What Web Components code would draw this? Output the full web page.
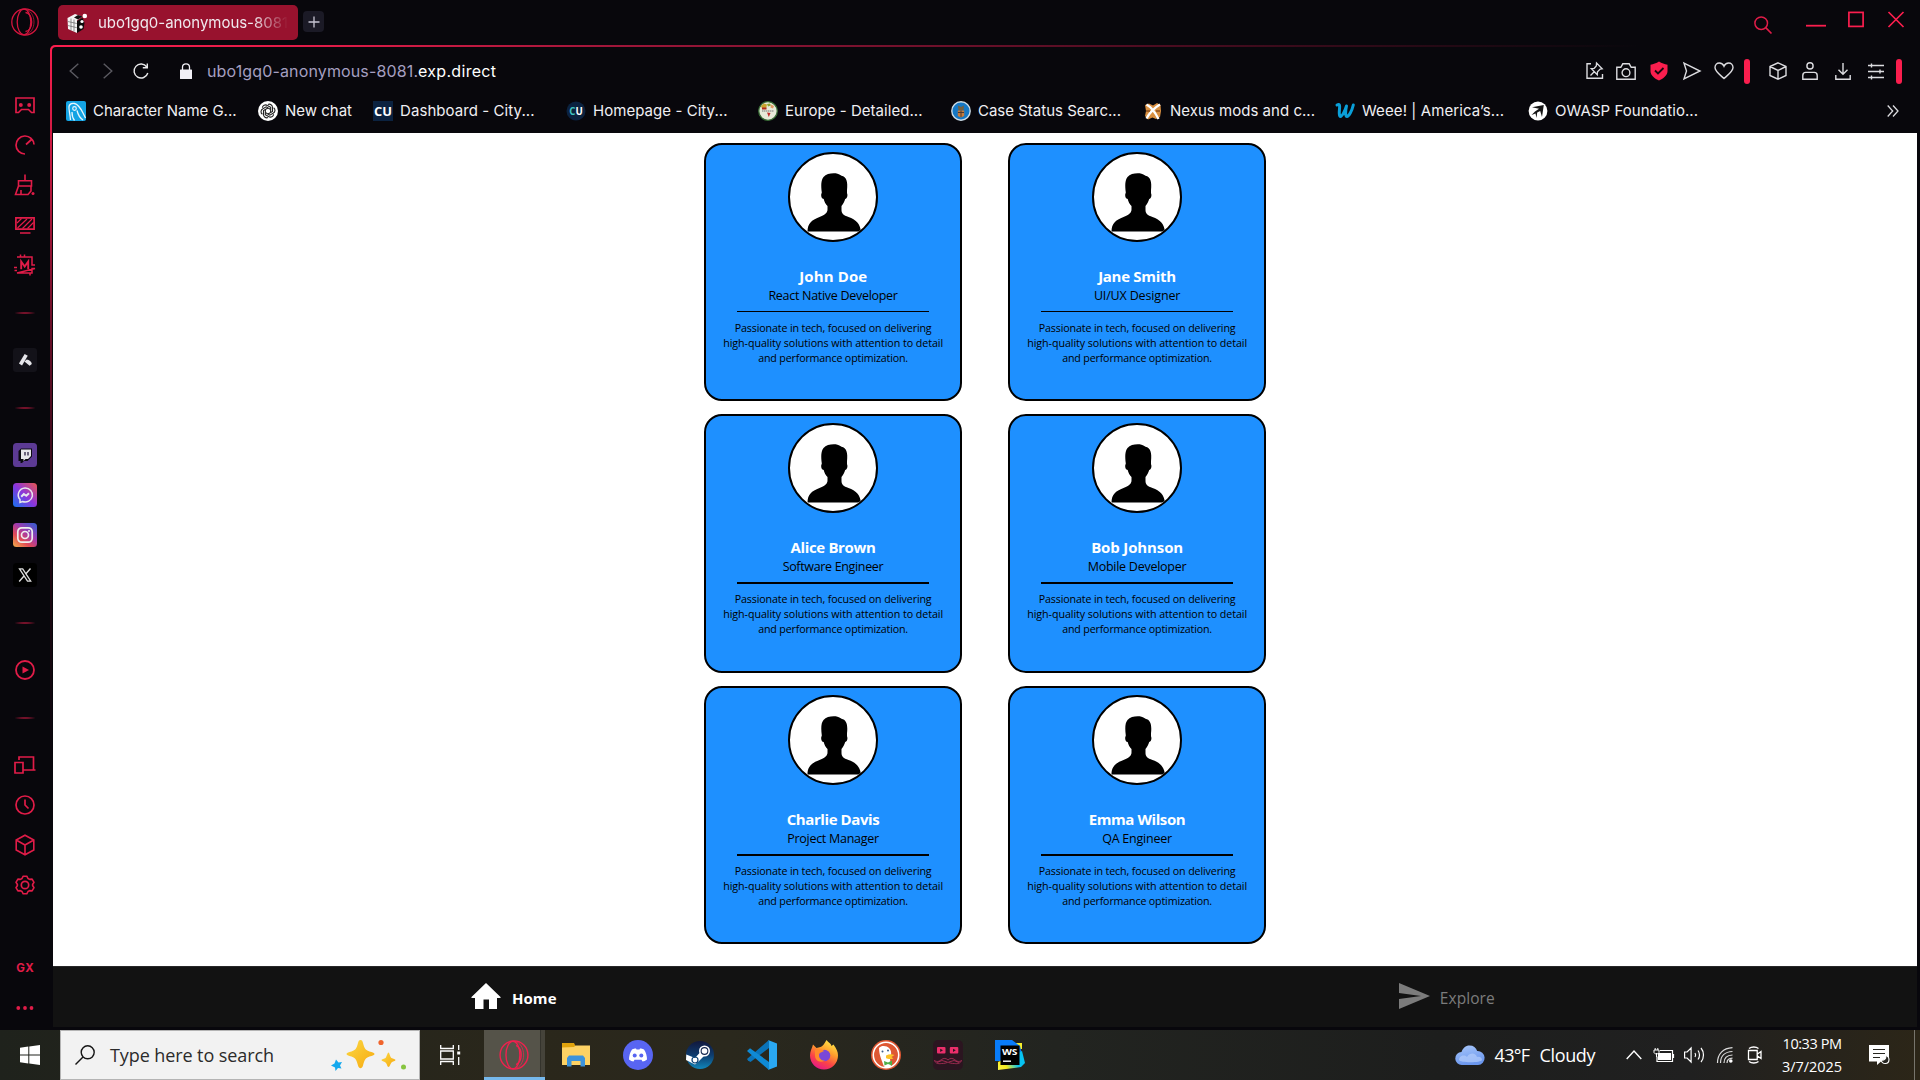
<!DOCTYPE html>
<html lang="en">
<head>
<meta charset="utf-8">
<title>Profile cards</title>
<style>
html,body{margin:0;padding:0;height:100%;overflow:hidden;background:#08070c}
</style>
</head>
<body>
<desktop-screen></desktop-screen>
<script>
const ICONS = {
  opera: ['0 0 28 28', `<g fill="none" stroke="#d4153e" stroke-width="1.300"><circle cx="14" cy="14" r="13.200"/><ellipse cx="13" cy="14" rx="6.800" ry="12.800"/><path d="M14.500 4.500c3.600 0 6.200 4.300 6.200 9.500s-2.600 9.500-6.200 9.500"/><path d="M14.500 1.200c5 1 8.500 6.500 8.500 12.800s-3.500 11.800-8.500 12.800" stroke-width=".7"/></g>`],
  opera2: ['0 0 28 28', `<g fill="none" stroke="#f0204e" stroke-width="1.300"><ellipse cx="14" cy="14" rx="13" ry="13.200"/><ellipse cx="13" cy="14" rx="6.500" ry="12.800"/><path d="M16 5c3 1.500 4.700 5 4.700 9s-1.700 7.500-4.700 9"/><path d="M15 1.200c4.600 1 8 6.500 8 12.800s-3.400 11.800-8 12.800" stroke-width=".7"/></g>`],
  pad: ['0 0 20 18', `<path d="M1 2h18v14.500h-2.500l-3-3h-7l-3 3H1z" fill="none" stroke="currentColor" stroke-width="1.700"/><circle cx="5.800" cy="9" r="2" fill="currentColor"/><circle cx="14.200" cy="9" r="2" fill="currentColor"/>`],
  gauge: ['0 0 20 20', `<path d="M10 19a9 9 0 1 1 9-9.500M11 9.500l5.500-5M15 2.500l2.800 2.800" fill="none" stroke="currentColor" stroke-width="1.700"/>`],
  broom: ['0 0 22 22', `<path d="M11 0.500v6M4.500 12V6.800h13V12zM4.500 12 1.500 20.500h12.500l3-3.500V12M7 20v-4" fill="none" stroke="currentColor" stroke-width="1.600"/><circle cx="19" cy="19.500" r="1.500" fill="currentColor"/>`],
  monitor: ['0 0 20 17', `<path d="M.9.9h18.200v11.200H.9zM5 16h10.500" fill="none" stroke="currentColor" stroke-width="1.700"/><path d="M2.500 11 12 2M7.500 11.500 17 2M12.500 11.500 18.500 5.500M2 6 6.500 1.500" fill="none" stroke="currentColor" stroke-width="1.200"/>`],
  chip: ['0 0 22 22', `<path d="M3 3h15v8h3M21 14.500h-3v4.500H3zM6.500 3V.5M10.500 3V.5M3 13.500H0M3 16.500H.5M16 19v2.500" fill="none" stroke="currentColor" stroke-width="1.500"/><path d="M7.200 15.200V7.500l3.500 5 3.500-5v7.700" fill="none" stroke="currentColor" stroke-width="1.900"/>`],
  aria: ['0 0 24 24', `<rect width="24" height="24" rx="3" fill="#131219"/><path d="M7.500 16.500 13.200 6.800" stroke="#e6e6ea" stroke-width="3.600" stroke-linecap="butt"/><path d="M13.800 11.500c2.500.2 4.700 2 5 4.500l-2.200 1.800-5.200-4.300z" fill="#e6e6ea"/>`],
  twitch: ['0 0 24 24', `<rect width="24" height="24" rx="3.500" fill="#5c3a94"/><path d="M5.500 8 8 5.500h11v8L14.500 18H11l-2 2H7.500v-2h-2z" fill="#0c0b12"/><path d="M8 6.500h10V13l-3 3h-2.500L10.500 18v-2H8z" fill="#e6e6ea"/><path d="M12 9v3.500M15 9v3.500" stroke="#2a1f42" stroke-width="1.300"/>`],
  messenger: ['0 0 24 24', `<defs><linearGradient id="m" x1="0" y1="1" x2="1" y2="0"><stop offset="0" stop-color="#1673f0"/><stop offset=".5" stop-color="#8b35dd"/><stop offset="1" stop-color="#e8574f"/></linearGradient></defs><rect width="24" height="24" rx="3.500" fill="url(#m)"/><path d="M12 5a7.300 7 0 1 1-2.500 13.500L7 19.500v-3A7.300 7 0 0 1 12 5z" fill="none" stroke="#e6e6ee" stroke-width="1.500"/><path d="m8.200 13.700 2.600-2.700 2.500 1.800 2.700-2.500" stroke="#e6e6ee" stroke-width="2" fill="none"/>`],
  insta: ['0 0 24 24', `<defs><linearGradient id="i" x1="0" y1="1" x2=".8" y2="0"><stop offset="0" stop-color="#f3b34c"/><stop offset=".35" stop-color="#e14a55"/><stop offset=".65" stop-color="#a03aae"/><stop offset="1" stop-color="#4358cc"/></linearGradient></defs><rect width="24" height="24" rx="3.500" fill="url(#i)"/><rect x="4.800" y="4.800" width="14.400" height="14.400" rx="4" fill="none" stroke="#eee" stroke-width="1.700"/><circle cx="12" cy="12" r="3.500" fill="none" stroke="#eee" stroke-width="1.700"/><circle cx="16" cy="8" r="1" fill="#eee"/>`],
  x: ['0 0 24 24', `<rect width="24" height="24" rx="3.500" fill="#000"/><path d="M6.500 5.800h3.200l8 12.400h-3.200z" fill="none" stroke="#ddd" stroke-width="1.300"/><path d="M17.500 5.500 12.700 11M11 13l-4.800 5.500" stroke="#ddd" stroke-width="1.400"/>`],
  play: ['0 0 20 20', `<circle cx="10" cy="10" r="9" fill="none" stroke="currentColor" stroke-width="1.800"/><path d="M7.500 6.500v7l6.500-3.500z" fill="currentColor"/>`],
  devices: ['0 0 22 18', `<path d="M5 4V1h14.500v13M9.500 14H21.500M1 6.500h8v10.500H1z" fill="none" stroke="currentColor" stroke-width="1.700"/>`],
  clock: ['0 0 20 20', `<circle cx="10" cy="10" r="9" fill="none" stroke="currentColor" stroke-width="1.700"/><path d="M10 4.500V10l3.500 3.500" fill="none" stroke="currentColor" stroke-width="1.700"/>`],
  cube: ['0 0 20 22', `<path d="M10 1.200 18.800 6v10L10 20.800 1.200 16V6zM1.200 6 10 11l8.800-5M10 11v9.500" fill="none" stroke="currentColor" stroke-width="1.600"/>`],
  gear: ['0 0 20 20', `<path d="M8.200 1.200h3.600l1.200 2.300 1.500.9 2.600-.3 1.900 3.200-1.400 2.200v1l1.400 2.200-1.900 3.200-2.600-.3-1.500.9-1.200 2.300H8.200L7 16.500l-1.500-.9-2.600.3L1 12.700l1.400-2.200v-1L1 7.300l1.900-3.200 2.600.3L7 3.500z" fill="none" stroke="currentColor" stroke-width="1.600" stroke-linejoin="round"/><circle cx="10" cy="10" r="3.700" fill="none" stroke="currentColor" stroke-width="1.700"/>`],
  dots: ['0 0 18 4', `<g fill="currentColor"><circle cx="2.300" cy="2" r="1.900"/><circle cx="9" cy="2" r="1.900"/><circle cx="15.500" cy="2" r="1.900"/></g>`],
  boxes: ['0 0 20 20', `<path d="M.5 5 8 1l7 2.500-5 4V20L1 16z" fill="#f4f4f4"/><path d="m10 8 5.500-3 2 5-1 6L10 20z" fill="#0c0c0c"/><path d="M7 4.500 11 2l4.500 1.500L11 6.500z" fill="#111"/><path d="M.8 8.500l9 2M.8 12.500l9 2.200M4 5.500v12M7 6.500v12" stroke="#666" stroke-width=".7"/><circle cx="17.800" cy="3" r="2.300" fill="#fff"/><circle cx="15" cy="8.500" r="1.600" fill="#fff"/><circle cx="14" cy="14" r="1.800" fill="#fff"/>`],
  plus: ['0 0 12 12', `<path d="M6 .5v11M.5 6h11" stroke="#c8c5d3" stroke-width="1.300"/>`],
  back: ['0 0 10 16', `<path d="M9.300.7 1.200 8l8.100 7.300" fill="none" stroke="#5b5a61" stroke-width="1.400"/>`],
  fwd: ['0 0 10 16', `<path d="M.7.7 8.800 8 .7 15.300" fill="none" stroke="#5b5a61" stroke-width="1.400"/>`],
  reload: ['0 0 16 16', `<path d="M13.800 4A7 7 0 1 0 14.800 10M14.300.5v4.300H9.800" fill="none" stroke="#e8e8ea" stroke-width="1.400"/>`],
  lock: ['0 0 12 16', `<rect y="6.500" width="12" height="9.500" rx=".6" fill="#f1eff6"/><path d="M2.500 7V4a3.500 3.200 0 0 1 7 0v3" fill="none" stroke="#f1eff6" stroke-width="1.300"/>`],
  lens: ['0 0 18 18', `<circle cx="7.200" cy="7.200" r="6.300" fill="none" stroke="#e01c48" stroke-width="1.500"/><path d="m11.700 11.700 5.800 5.800" stroke="#e01c48" stroke-width="1.700"/>`],
  min: ['0 0 20 16', `<path d="M0 13.700h20" stroke="#fa1e4e" stroke-width="1.800"/>`],
  max: ['0 0 16 16', `<rect x=".9" y=".4" width="14.200" height="14" fill="none" stroke="#fa1e4e" stroke-width="1.700"/>`],
  close: ['0 0 16 16', `<path d="m.5 0 15 15M15.500 0l-15 15" stroke="#fa1e4e" stroke-width="1.700"/>`],
  pin: ['0 0 18 18', `<path d="M5 1.700H1v14.500h15.500V12" fill="none" stroke="#dcdce0" stroke-width="1.400"/><path d="m10.500 1 5.700 5.700-2 .3-2.700 2.700-.2 3L5.200 6.500l3-.2L10.300 4zM8.200 9.700 4.500 13.500" fill="none" stroke="#dcdce0" stroke-width="1.300"/>`],
  camera: ['0 0 20 17', `<path d="M.8 4.300h4L6.800.8h6.400l2 3.500h4v12H.8z" fill="none" stroke="#dcdce0" stroke-width="1.400"/><circle cx="10" cy="9.700" r="3.900" fill="none" stroke="#dcdce0" stroke-width="1.400"/>`],
  shield: ['0 0 18 20', `<path d="M9 .5c2.700 1.800 5.600 2.700 8.500 3.200v6.500c0 4.300-4.500 7.500-8.500 9.300C5 17.700.5 14.500.5 10.200V3.700C3.400 3.200 6.300 2.300 9 .5z" fill="#fa1e4e"/><path d="m5 9.500 3 3 5.500-5.500" stroke="#17070d" stroke-width="1.800" fill="none"/>`],
  send: ['0 0 18 18', `<path d="M1 1.200 17 9 1 16.800 3.500 9z" fill="none" stroke="#dcdce0" stroke-width="1.400"/>`],
  heart: ['0 0 20 18', `<path d="M10 16.500C5 12 1 9.300 1 5.500 1 2.800 3 1 5.300 1 7.500 1 9.200 2.300 10 4.200 10.800 2.300 12.500 1 14.700 1 17 1 19 2.800 19 5.500c0 3.800-4 6.500-9 11z" fill="none" stroke="#dcdce0" stroke-width="1.400"/>`],
  cubew: ['0 0 18 18', `<path d="M9 .8 17 4.500v9L9 17.200 1 13.500v-9zM1 4.500l8 4 8-4M9 8.500v8.500" fill="none" stroke="#dcdce0" stroke-width="1.400"/>`],
  person: ['0 0 16 18', `<circle cx="8" cy="3.900" r="3.100" fill="none" stroke="#dcdce0" stroke-width="1.400"/><path d="M.8 17.200v-3.800c0-2 1-3 3-3h8.400c2 0 3 1 3 3v3.800z" fill="none" stroke="#dcdce0" stroke-width="1.400"/>`],
  download: ['0 0 16 17', `<path d="M.8 12v4.300h14.400V12M8 0v11M3.500 6.800 8 11.300l4.500-4.500" fill="none" stroke="#dcdce0" stroke-width="1.400"/>`],
  sliders: ['0 0 16 17', `<path d="M0 2.500h16M0 8.500h16M0 14.500h16M3.500.5v4M12 6.500v4M3.500 12.500v4" fill="none" stroke="#dcdce0" stroke-width="1.400"/>`],
  more: ['0 0 12 12', `<path d="m.7.500 5 5.500-5 5.500M6 .5 11 6l-5 5.500" fill="none" stroke="#dcdce0" stroke-width="1.300"/>`],
  bkName: ['0 0 20 20', `<rect width="20" height="20" rx="2" fill="#14a3e4"/><path d="M4.500 19C4 12 2.500 8 3 5.500 3.500 3 6 2 8.500 2.500c4 .8 6 4.500 8.500 9.500l2.500 5M6 11c0 3 .5 6 2.500 8.500M11 9.500c1 4 3 7.500 6 9.500" fill="none" stroke="#e8f6fd" stroke-width="1.300"/><circle cx="8.500" cy="7.500" r="1.800" fill="none" stroke="#e8f6fd" stroke-width="1.200"/>`],
  bkChat: ['0 0 20 20', `<circle cx="10" cy="10" r="10" fill="#fff"/><g fill="none" stroke="#222" stroke-width="1.100"><path id="p" d="M10 3.500c2-1 4.700.5 4.500 3.200v3.800L10 13"/><use href="#p" transform="rotate(60 10 10)"/><use href="#p" transform="rotate(120 10 10)"/><use href="#p" transform="rotate(180 10 10)"/><use href="#p" transform="rotate(240 10 10)"/><use href="#p" transform="rotate(300 10 10)"/></g>`],
  bkCU: ['0 0 20 20', `<rect width="20" height="20" fill="#0b2240"/><text x="10" y="14.800" font-family="Open Sans" font-weight="700" font-size="13" text-anchor="middle" textLength="18" lengthAdjust="spacingAndGlyphs" fill="#fff">CU</text>`],
  bkCU2: ['0 0 20 20', `<circle cx="10" cy="10" r="9.500" fill="#0b2240"/><text x="3.300" y="14" font-family="Open Sans" font-weight="700" font-size="10.500" textLength="13.500" lengthAdjust="spacingAndGlyphs" fill="#fff"><tspan fill="#3fc5c2">C</tspan>U</text>`],
  bkEu: ['0 0 20 20', `<circle cx="10" cy="10" r="9.300" fill="#e7ead9" stroke="#376b35" stroke-width="1.300"/><path d="m3 5 3-2.500 3 1L8 8 4 7.500z" fill="#c9a42c"/><path d="M4 6.500h4.500V8.500H4z" fill="#b02a20"/><path d="m9 3 3-.5 1 2-3 1z" fill="#8ca62e"/><path d="m13 3.500 3 1.500-1 2.500-2.500-1z" fill="#e29a65"/><path d="m9 11.500 3.500.5-1.700 4z" fill="#c22a2a"/><path d="M4 10h12" stroke="#777" stroke-dasharray="1.500 .5"/>`],
  bkCase: ['0 0 20 20', `<circle cx="10" cy="10" r="9.200" fill="#1678c4" stroke="#cfdde6" stroke-width="1.400"/><path d="m7 4.500 3 1.500 3-1.500-.5 5h-5z" fill="#75603e"/><path d="M6.800 9.500h6.400v5.500L10 16.500 6.800 15z" fill="#c77c3c"/><path d="M7 11.500h6M10 9.500v6.500" stroke="#4e3a31" stroke-width="1"/>`],
  bkNexus: ['0 0 20 20', `<path d="m2 4 4-1.500 4 2 4-2.500 3.500 2L18 10l-1 6-4 2-3.500-1.500L5 18.500 2 15l1-5z" fill="#d98f40"/><path d="M3.500 3.500C8 6 13 13 15.500 18M17 3.500C11 7 6 13 3.500 17.500" stroke="#fff" stroke-width="2.300" fill="none"/><path d="M7 10H3M13 10h4" stroke="#8b4f1d" stroke-width="1.300"/>`],
  bkWeee: ['0 0 20 20', `<path d="M2 4c3-1.500 2.800 1 2.500 4s-.5 7.500 1 7.500S10 10 11.500 5C10.500 9.500 10 15.500 12 15.500c2 0 5-6 6.300-11.500" fill="none" stroke="#0a9fd9" stroke-width="3" stroke-linecap="round" stroke-linejoin="round"/>`],
  bkOwasp: ['0 0 20 20', `<circle cx="10" cy="10" r="9.400" fill="#fff"/><path d="M4 6.300 15.800 4 14 16l-1.800-6-3 1.500-.7 5.500-1-4.500-4 1.500 3.500-3.500L11 7.800z" fill="#151515"/>`],
  home: ['0 0 30 26', `<path d="M15 0 30 14.500 28.500 15H26v11h-8v-9.500h-5.500V26H4V15H1.500L0 14.500z" fill="#fff"/>`],
  explore: ['0 0 31 26', `<path d="M0 0 31 13 0 26V16l22-3L0 10z" fill="#7c7c7c"/>`],
  win: ['0 0 20 20', `<path d="M0 2.700 8.300 1.500v8H0zM9.300 1.400 20 0v9.500H9.300zM0 10.500h8.300v8L0 17.300zM9.300 10.500H20V20L9.300 18.600z" fill="#fff"/>`],
  search: ['0 0 20 20', `<circle cx="12.700" cy="7.300" r="6.500" fill="none" stroke="#151515" stroke-width="1.400"/><path d="M8 12 .5 19.500" stroke="#151515" stroke-width="1.500"/>`],
  sparkle: ['0 0 76 40', `<defs><linearGradient id="s" x1="0" y1="0" x2="1" y2="1"><stop offset="0" stop-color="#fbd843"/><stop offset="1" stop-color="#f7a90f"/></linearGradient></defs><path d="M30.500 5c1.500 0 2 1 2.500 3 1.500 6 2.500 7.500 8.500 9 4 1 4 3 0 4-6 1.500-7 3.500-8.500 9.500-1 3.500-4 3.500-5 0-1.500-6-2.500-8-8.500-9.500-4-1-4-3 0-4 6-1.500 7-3 8.500-9 .5-2 1-3 2.500-3z" fill="url(#s)"/><path d="M58.500 17.500c1 0 1.500 4.500 3 5.500s4 1 4 2-3 1.500-4 2.500-1.700 4.500-3 4.500-1.500-3.500-3-4.500-4-1.500-4-2.500 3-1 4-2 2-5.500 3-5.500z" fill="url(#s)"/><path d="m6 24.500 2.500 3 3.500-.5-2 3.500 1.500 3-3.500-.5L5.500 36l-.5-3.500L1 30.500l3.500-2z" fill="#14a9ee"/><circle cx="51" cy="7.500" r="2.600" fill="#f0642c"/><circle cx="73.500" cy="32" r="2.500" fill="#86c440"/>`],
  task: ['0 0 21 20', `<path d="M.7 0v3.500h12.600V0M.7 20v-3.500h12.600V20M.7 6h12.600v8H.7zM18.700 0v5M18.700 12v8" fill="none" stroke="#fff" stroke-width="1.300"/><path d="M17.200 6.500h3v3h-3z" fill="#fff"/>`],
  folder: ['0 0 28 24', `<path d="M0 0h12l1.500 3H28v19H0z" fill="#e0a30d"/><path d="M0 4.500 12 4l1.500-1.500H28V22H0z" fill="#fdd264"/><path d="M5 23.500V15l2-2.500h14l2 2.500v8.500h-4.500V18h-9v5.500z" fill="#3c93dc"/>`],
  discord: ['0 0 30 30', `<circle cx="15" cy="15" r="15" fill="#5865f2"/><path d="M9 9.500c2-1 3.500-1.200 4-1l.5 1h3l.5-1c.5-.2 2 0 4 1 2 3 3 6.500 3 10-1.500 1.300-3 1.800-4.500 2l-1-1.800h-7l-1 1.800c-1.500-.2-3-.7-4.500-2 0-3.500 1-7 3-10z" fill="#fff"/><circle cx="11.700" cy="15.500" r="2" fill="#5865f2"/><circle cx="18.300" cy="15.500" r="2" fill="#5865f2"/>`],
  steam: ['0 0 30 30', `<defs><linearGradient id="t" x1="0" y1="0" x2="0" y2="1"><stop offset="0" stop-color="#12183c"/><stop offset=".5" stop-color="#0d3b6d"/><stop offset="1" stop-color="#1187bb"/></linearGradient></defs><circle cx="15" cy="15" r="14" fill="url(#t)"/><path d="M1.300 14.500 10 18l5-5.500 4 3.500-6 6-3 2.500-5-2.500-4-2z" fill="#fff"/><circle cx="19.500" cy="11" r="4.700" fill="#15274f" stroke="#fff" stroke-width="1.600"/><circle cx="19.500" cy="11" r="2.800" fill="#fff"/><circle cx="10" cy="20" r="3" fill="none" stroke="#0e4376" stroke-width="1.200"/>`],
  vscode: ['0 0 30 30', `<path d="M22 0v8L3.500 22 1 20.500 0 19z" fill="#0a73b8"/><path d="M0 11 3 8.200 22 22v8z" fill="#0f8ad5"/><path d="M21 0 30 3.500v23L21 30l1-1V1z" fill="#2aa8f2"/>`],
  firefox: ['0 0 30 30', `<defs><linearGradient id="f" x1=".8" y1="0" x2=".3" y2="1"><stop offset="0" stop-color="#fff04a"/><stop offset=".4" stop-color="#ff9a2c"/><stop offset=".7" stop-color="#fb4446"/><stop offset="1" stop-color="#e3178b"/></linearGradient></defs><path d="M4 4.500 7.500 8l4-1c2-.5 4-3.500 6-7 2 2.500 4.500 3.500 5 6l2-1.500c3 4 4.500 7.500 4.500 11A14 14 0 0 1 1 15.500C1 11 3 8.500 4 4.500z" fill="url(#f)"/><circle cx="15.500" cy="15.500" r="5.800" fill="#7a47d8"/><path d="M6 10c3-2 7-1 9 1-2 1.500-5 1-5 4.500 0 3 3 5.500 6 5-5 3-10 0-10-5z" fill="#ff8a2a"/>`],
  duck: ['0 0 30 30', `<circle cx="15" cy="15" r="15" fill="#de5833"/><circle cx="15" cy="15" r="12.700" fill="none" stroke="#fff" stroke-width="1.500"/><path d="M8 8c2-3 8-2.500 10 0 2 2 2.500 4 2 7l-1 4 1 8c-3 .8-5 .5-7-.5C11 21 8 15 8 8z" fill="#fff"/><path d="M15 15.500c3-1.500 6-1.500 8.500-.5l-3 2 2 1.500c-3 1-6 .5-7.500-.5z" fill="#fcc127"/><path d="m13 21 4 1.500 4-2v5l-4-1.500-3.500 1.500z" fill="#4fae48"/><circle cx="17" cy="10.500" r="1" fill="#3d5f8a"/><circle cx="11.500" cy="11.500" r="1" fill="#3d5f8a"/>`],
  mustache: ['0 0 30 30', `<rect width="30" height="30" rx="5" fill="#2b1520"/><rect x="4" y="7" width="8.500" height="6.500" rx="1" fill="#ec2e6b"/><rect x="16.800" y="7" width="8.500" height="6.500" rx="1" fill="#ec2e6b"/><path d="M7.200 8.700v3.200l2.800-1.600zM20 8.700v3.200l2.800-1.600z" fill="#2b1520"/><path d="M1.500 20.500c3 2 5 .5 7-1s4.500-1.500 6.500.5c2-2 4.500-2 6.500-.5s4 3 7 1c-1 3-4 3.500-7 3-3 0-5-.5-6.500-1.500-1.500 1-3.500 1.500-6.500 1.500-3 .5-6 0-7-3zM4 22.500l5-2 5 1.500M26 22.500l-5-2-5 1.500" fill="none" stroke="#b8305c" stroke-width=".8"/>`],
  ws: ['0 0 30 30', `<defs><linearGradient id="w" x1="0" y1="1" x2="1" y2=".4"><stop offset="0" stop-color="#fcf84a"/><stop offset=".3" stop-color="#f5ea1e"/><stop offset=".65" stop-color="#07c3f2"/></linearGradient></defs><path d="M18 3h9v6h-9z" fill="#f5ee2a"/><path d="M0 0h17l8 6 2 8-7 7H0z" fill="#087cfa"/><path d="m3 22 24-11 3 12-4 4-23 3z" fill="url(#w)"/><rect x="5.500" y="5.500" width="19" height="19.500" fill="#000"/><text x="7" y="14.500" font-family="Open Sans" font-size="9.500" font-weight="700" textLength="15.500" lengthAdjust="spacingAndGlyphs" fill="#fff">WS</text><path d="M8 21.200h8" stroke="#fff" stroke-width="1.400"/>`],
  cloud: ['0 0 30 20', `<defs><linearGradient id="c" x1="0" y1="0" x2=".3" y2="1"><stop offset="0" stop-color="#a9c8fa"/><stop offset="1" stop-color="#6b97ee"/></linearGradient></defs><path d="M7 20a6.500 6.500 0 0 1-.5-13C8 3 10.500.5 14.500.5c4 0 6.500 2 7.700 5.500A7 7 0 1 1 23 20z" fill="url(#c)"/><path d="M4 15c0-4 5-6 8-3 3-5 9-4 10 0 3-1 5 1 5 3-1 3-22 3-23 0z" fill="#b3cdfb" opacity=".7"/>`],
  up: ['0 0 16 10', `<path d="m.7 9 7.300-8 7.300 8" fill="none" stroke="#fff" stroke-width="1.400"/>`],
  battery: ['0 0 20 16', `<path d="M4 6h13v7H4z" fill="#fff"/><path d="M6 3.500h12.500v11H3v-5M19.500 7v4" fill="none" stroke="#fff" stroke-width="1.200"/><path d="M0 3h5v2.500L3.500 7h-2L0 5.500zM1.200 1v2M3.800 1v2M2.500 6v4" stroke="#fff" stroke-width="1" fill="none"/>`],
  sound: ['0 0 21 18', `<path d="M.6 6h2.500l4-4v14l-4-4H.600zM11 7c.8 1.200.8 2.800 0 4M14 4.500c2 2.500 2 6.500 0 9M17 2c3.300 4 3.300 10 0 14" fill="none" stroke="#fff" stroke-width="1.200"/>`],
  wifi: ['0 0 16 16', `<path d="M.5 16C.5 7 6 1 15.500.6M3.500 16C3.500 9 8 4.700 15.500 4.500M7 16c0-4.500 3-7.800 8.500-8M10 16c0-2.500 2-4.700 5.500-4.800" fill="none" stroke="#ddd" stroke-width="1.200"/><circle cx="13.800" cy="14" r="1.800" fill="#fff"/>`],
  meet: ['0 0 15 18', `<path d="M1.500 4.500h8.700v9H1.500zM10.500 8l3.500-2.500v7L10.500 10M2 2.500c2.500-2 7-2 9.500 0M2 15.500c2.500 2 7 2 9.500 0" fill="none" stroke="#fff" stroke-width="1.300"/>`],
  note: ['0 0 21 21', `<path d="M0 0h20v16.500h-8L8 20v-3.500H0z" fill="#fff"/><path d="M4 4.500h12M4 8.500h12M4 12.500h7" stroke="#272620" stroke-width="1.200"/><path d="M16.500 10.500c1 3-1 5-4.500 4.500 1 4.500 8 5 8-.5 0-2-1.500-3.500-3.500-4z" fill="#272620" stroke="#fff" stroke-width="1.100"/>`],
  person2: ['0 0 90 90', `<path d="M19.500 79.500c0-8 4-11.500 12-14.500 5-2 8-4 8-7.500V54c-2-2-3.300-4.500-3.800-7-2-.3-2.700-2.500-2.500-4.500l.6-2c-.9-7-.8-12.500 1.700-15.500 3-3.300 9-4.200 14-3.300 2 .4 3 1.500 4 2 5 1 6.500 6 5.500 14.500v3c1 2 .2 5.300-1.800 5.800-.6 2.500-2.200 5-3.700 7v4c0 3.500 2 5.200 7 7 7.500 2.700 11.500 6.500 12.500 14.500z"/>`]
};

class UiIcon extends HTMLElement {
  connectedCallback() {
    const [vb, body] = ICONS[this.getAttribute('name')];
    const [, , vw, vh] = vb.split(' ');
    const w = this.getAttribute('w') || vw, h = this.getAttribute('h') || vh;
    this.attachShadow({mode: 'open'}).innerHTML =
      `<style>:host{display:block;flex:none;width:${w}px;height:${h}px}svg{display:block;overflow:visible}</style>
       <svg width="${w}" height="${h}" viewBox="${vb}" preserveAspectRatio="none">${body}</svg>`;
  }
}

/* A single line of text tracked so that it is exactly w pixels long. */
class FitText extends HTMLElement {
  connectedCallback() {
    if (this.shadowRoot) return;
    this.attachShadow({mode: 'open'}).innerHTML =
      `<style>:host{display:block;flex:none;white-space:pre}span{display:inline-block}</style><span><slot></slot></span>`;
    const span = this.shadowRoot.querySelector('span');
    const w = +this.getAttribute('w');
    if (!w) return;
    const n = this.textContent.length;
    const gap = (w - span.getBoundingClientRect().width) / (n - 1);
    span.style.letterSpacing = gap + 'px';
    span.style.marginRight = -gap + 'px';
  }
}

class BookmarkItem extends HTMLElement {
  connectedCallback() {
    this.attachShadow({mode: 'open'}).innerHTML =
      `<style>:host{display:flex;flex:none;align-items:center;gap:7px;width:${this.getAttribute('span')}px;height:38px;font:15px/38px Inter,sans-serif;color:#f0eff3}</style>
       <ui-icon name="${this.getAttribute('icon')}"></ui-icon><fit-text w="${this.getAttribute('w')}">${this.getAttribute('label')}</fit-text>`;
  }
}

class SideBar extends HTMLElement {
  connectedCallback() {
    const it = n => `<div class="i"><ui-icon name="${n}"></ui-icon></div>`;
    const hr = '<div class="d"><i></i></div>';
    this.attachShadow({mode: 'open'}).innerHTML = `<style>
      :host{display:flex;flex-direction:column;width:50px;height:1030px;flex:none;color:#e01c48;background:#08070c}
      div{display:flex;flex:none;align-items:center;justify-content:center;width:50px}
      .logo{height:44px;margin-bottom:41px}
      .i{height:40px}
      .d{height:55px}
      .d i{width:24px;height:2px;background:radial-gradient(closest-side,#e01c48,#e01c4800)}
      .gx{height:40px;margin-top:43px;font:700 11.500px/40px Inter,sans-serif}
      </style>
      <div class="logo"><ui-icon name="opera"></ui-icon></div>
      ${['pad','gauge','broom','monitor','chip'].map(it).join('')}${hr}${it('aria')}${hr}
      ${['twitch','messenger','insta','x'].map(it).join('')}${hr}${it('play')}${hr}
      ${['devices','clock','cube','gear'].map(it).join('')}
      <div class="gx"><fit-text w="17.500">GX</fit-text></div>${it('dots')}`;
  }
}

class TitleBar extends HTMLElement {
  connectedCallback() {
    this.attachShadow({mode: 'open'}).innerHTML = `<style>
      :host{display:flex;height:45px;flex:none;background:#08070c}
      .tab{display:flex;align-items:center;gap:11px;box-sizing:border-box;width:240px;height:35px;margin:5px 0 0 8px;padding:0 10px 0 9px;border-radius:5px;background:#98122e;color:#f0e9ee;font:15px/35px Inter,sans-serif}
      .t{flex:1;overflow:hidden;-webkit-mask:linear-gradient(90deg,#000 155px,transparent 190px);mask:linear-gradient(90deg,#000 155px,transparent 190px)}
      .add{display:flex;align-items:center;justify-content:center;width:21px;height:21px;margin:11px 0 0 5px;border-radius:4px;background:#1b1a26}
      .w{display:flex;margin:12px 16px 0 auto}
      </style>
      <div class="tab"><ui-icon name="boxes"></ui-icon><div class="t"><fit-text w="190">ubo1gq0-anonymous-8081</fit-text></div></div>
      <div class="add"><ui-icon name="plus"></ui-icon></div>
      <div class="w"><ui-icon name="lens" style="margin:4px 34px 0 0"></ui-icon><ui-icon name="min" style="margin-right:22px"></ui-icon><ui-icon name="max" style="margin-right:24px"></ui-icon><ui-icon name="close"></ui-icon></div>`;
  }
}

class AddressBar extends HTMLElement {
  connectedCallback() {
    const cell = (n, m) => `<ui-icon name="${n}" style="margin-left:${m}px"></ui-icon>`;
    this.attachShadow({mode: 'open'}).innerHTML = `<style>
      :host{display:flex;align-items:center;height:48px;flex:none;padding-left:17px;font:16px/48px Inter,sans-serif}
      .u{color:#a59fc0;margin-left:15px}.v{color:#fff}
      .r{display:flex;align-items:center;margin:0 18px 0 auto}
      b{width:6px;height:25px;border-radius:3px;background:#fa1e4e}
      </style>
      ${cell('back', 0)}${cell('fwd', 24)}${cell('reload', 20)}${cell('lock', 31)}
      <fit-text class="u" w="211">ubo1gq0-anonymous-8081.</fit-text><fit-text class="v" w="78">exp.direct</fit-text>
      <div class="r">${cell('pin', 0)}${cell('camera', 12.5)}${cell('shield', 14)}${cell('send', 15)}${cell('heart', 13)}
      <b style="margin-left:10px"></b>${cell('cubew', 19)}${cell('person', 15)}${cell('download', 17)}${cell('sliders', 17)}<b style="margin-left:12px"></b></div>`;
  }
}

class BookmarkBar extends HTMLElement {
  connectedCallback() {
    const rows = [['bkName',192,143.5,'Character Name G...'],['bkChat',115,67,'New chat'],['bkCU',193,134.5,'Dashboard - City...'],['bkCU2',192,134.5,'Homepage - City...'],['bkEu',193,137.5,'Europe - Detailed...'],['bkCase',192,143,'Case Status Searc...'],['bkNexus',192,145,'Nexus mods and c...'],['bkWeee',193,142,'Weee! | America’s...'],['bkOwasp',192,143,'OWASP Foundatio...']];
    this.attachShadow({mode: 'open'}).innerHTML = `<style>
      :host{display:flex;align-items:center;box-sizing:border-box;height:38px;flex:none;padding:0 21px 6px 14px}
      .m{margin-left:auto}</style>
      ${rows.map(r => `<bookmark-item icon="${r[0]}" span="${r[1]}" w="${r[2]}" label="${r[3]}"></bookmark-item>`).join('')}
      <ui-icon class="m" name="more"></ui-icon>`;
  }
}

class ProfileCard extends HTMLElement {
  connectedCallback() {
    const a = k => this.getAttribute(k);
    this.attachShadow({mode: 'open'}).innerHTML = `<style>
      :host{display:flex;flex-direction:column;align-items:center;box-sizing:border-box;width:258.330px;height:258.330px;border:2px solid #000;border-radius:18px;background:#1e90ff;font-family:"Open Sans",sans-serif;color:#000;padding-top:7px}
      .av{box-sizing:border-box;width:90px;height:90px;border:2px solid #000;border-radius:50%;background:#fff;overflow:hidden}
      .av ui-icon{margin:-2px}
      .n{margin-top:24px;font-size:15px;line-height:20px;font-weight:700;color:#fff}
      .r{margin-top:1px;font-size:12.500px;line-height:18px}
      hr{box-sizing:border-box;width:192px;height:2px;margin:6px 0 8px;border:0;border-top:${a('rule')}px solid #000}
      .p{font-size:10.700px;line-height:15px}
      </style>
      <div class="av"><ui-icon name="person2"></ui-icon></div>
      <fit-text class="n" w="${a('nw')}">${a('name')}</fit-text>
      <fit-text class="r" w="${a('rw')}">${a('job')}</fit-text>
      <hr>
      <fit-text class="p" w="197">Passionate in tech, focused on delivering</fit-text>
      <fit-text class="p" w="220">high-quality solutions with attention to detail</fit-text>
      <fit-text class="p" w="150">and performance optimization.</fit-text>`;
  }
}

class CardPage extends HTMLElement {
  connectedCallback() {
    const people = [['John Doe',68,'React Native Developer',129.5,1],['Jane Smith',78,'UI/UX Designer',86.5,1],['Alice Brown',85.5,'Software Engineer',101,2],['Bob Johnson',92,'Mobile Developer',99,2],['Charlie Davis',93,'Project Manager',92,2],['Emma Wilson',97,'QA Engineer',70,2]];
    this.attachShadow({mode: 'open'}).innerHTML = `<style>
      :host{display:flex;flex-direction:column;width:1864px;height:894px;margin-left:1px;background:#fff}
      main{flex:1;display:grid;grid-template-columns:258.330px 258.330px;grid-auto-rows:258.330px;column-gap:45.670px;row-gap:13px;padding:10px 0 0 651px}
      nav{display:flex;height:61px;box-sizing:border-box;border-top:1px solid #272728;background:#121212;font:16px/22px "Open Sans",sans-serif}
      nav div{flex:1;display:flex;align-items:flex-start;padding-top:16px}
      nav fit-text{margin-top:4px}
      </style>
      <main>${people.map(p => `<profile-card name="${p[0]}" nw="${p[1]}" job="${p[2]}" rw="${p[3]}" rule="${p[4]}"></profile-card>`).join('')}</main>
      <nav><div style="padding-left:418px"><ui-icon name="home"></ui-icon><fit-text w="44.500" style="margin-left:11px;color:#fff;font-weight:700;font-size:15px">Home</fit-text></div>
      <div style="padding-left:410.500px"><ui-icon name="explore"></ui-icon><fit-text w="55" style="margin-left:9.500px;color:#7c7c7c;font-size:15.500px">Explore</fit-text></div></nav>`;
  }
}

class TaskBar extends HTMLElement {
  connectedCallback() {
    const app = (n, w, h) => `<div class="a"><ui-icon name="${n}" w="${w}" h="${h}"></ui-icon></div>`;
    const tray = (n, m) => `<ui-icon name="${n}" style="margin-left:${m}px"></ui-icon>`;
    this.attachShadow({mode: 'open'}).innerHTML = `<style>
      :host{display:flex;align-items:center;height:50px;flex:none;box-sizing:border-box;width:1920px;background:linear-gradient(90deg,#1f221c,#2a271b 28%,#2a281d 38%,#222420 55%,#1d1e1d 75%,#202020 88%,#2c2618);font-family:"Open Sans",sans-serif;color:#fff}
      .s{display:flex;width:60px;justify-content:center;flex:none}
      .q{display:flex;align-items:center;box-sizing:border-box;width:360px;height:50px;border:1px solid #b4b4b4;background:#f2f2f2;color:#2b2b2b;font-size:18px;padding-left:14px;flex:none}
      .on{display:flex;width:61px;height:50px;margin-left:23px;flex:none;box-sizing:border-box;border-bottom:3px solid #76b9ed;background:linear-gradient(90deg,#555349 56px,#34332c 56px,#34332c 57px,#45433a 57px);align-items:center;padding:3px 0 0 15px}
      .a{display:flex;width:62px;justify-content:center;flex:none}
      .w{margin-left:auto;display:flex;align-items:center;height:50px;font-size:18px}
      .c{margin-left:20px;display:flex;flex-direction:column;align-items:flex-end;font-size:14.500px;line-height:23px;height:46px;margin-top:-1px}
      .e{width:1px;height:50px;background:#77756c;margin:0 5px 0 24px}
      </style>
      <div class="s"><ui-icon name="win"></ui-icon></div>
      <div class="q"><ui-icon name="search"></ui-icon><fit-text w="164" style="margin-left:15px">Type here to search</fit-text><ui-icon name="sparkle" style="margin:-1px 0 0 56px"></ui-icon></div>
      <ui-icon name="task" style="margin-left:20px"></ui-icon>
      <div class="on"><ui-icon name="opera2" w="30" h="30"></ui-icon></div>
      ${app('folder',28,24)}${app('discord',30,30)}${app('steam',30,30)}${app('vscode',30,30)}${app('firefox',30,30)}${app('duck',30,30)}${app('mustache',30,30)}${app('ws',30,30)}
      <div class="w"><ui-icon name="cloud"></ui-icon><fit-text w="35.500" style="margin-left:10px">43°F</fit-text><fit-text w="56" style="margin-left:9.500px">Cloudy</fit-text>
      ${tray('up',30.5)}${tray('battery',12)}${tray('sound',10)}${tray('wifi',12)}${tray('meet',14)}
      <div class="c"><fit-text w="59.500">10:33 PM</fit-text><fit-text w="60">3/7/2025</fit-text></div>
      ${tray('note',27)}<div class="e"></div></div>`;
  }
}

class DesktopScreen extends HTMLElement {
  connectedCallback() {
    this.attachShadow({mode: 'open'}).innerHTML = `<style>
      :host{display:flex;flex-direction:column;width:1920px;height:1080px;overflow:hidden;background:#08070c}
      .b{display:flex;height:1030px;flex:none}
      .c{width:1870px;display:flex;flex-direction:column}
      .f{height:985px;box-sizing:border-box;display:flex;padding:2px 0 0 2px;border-radius:5px 0 0 0;background:linear-gradient(90deg,#fa1e4e 0,#e01c48 15%,#a0163a 30%,#4a0c20 60%,#08070c 85%) top/100% 6px no-repeat,linear-gradient(#fa1e4e 0,#c41a40 12%,#6c1029 28%,#250a15 50%,#08070c 75%) left/6px 100% no-repeat}
      .g{flex:1;display:flex;flex-direction:column;background:#08070c;border-radius:4px 0 0 0}
      </style>
      <div class="b"><side-bar></side-bar><div class="c"><title-bar></title-bar><div class="f"><div class="g"><address-bar></address-bar><bookmark-bar></bookmark-bar><card-page></card-page></div></div></div></div>
      <task-bar></task-bar>`;
  }
}

customElements.define('desktop-screen', DesktopScreen);
customElements.define('side-bar', SideBar);
customElements.define('title-bar', TitleBar);
customElements.define('address-bar', AddressBar);
customElements.define('bookmark-bar', BookmarkBar);
customElements.define('bookmark-item', BookmarkItem);
customElements.define('card-page', CardPage);
customElements.define('profile-card', ProfileCard);
customElements.define('task-bar', TaskBar);
customElements.define('ui-icon', UiIcon);
customElements.define('fit-text', FitText);
</script>
</body>
</html>
